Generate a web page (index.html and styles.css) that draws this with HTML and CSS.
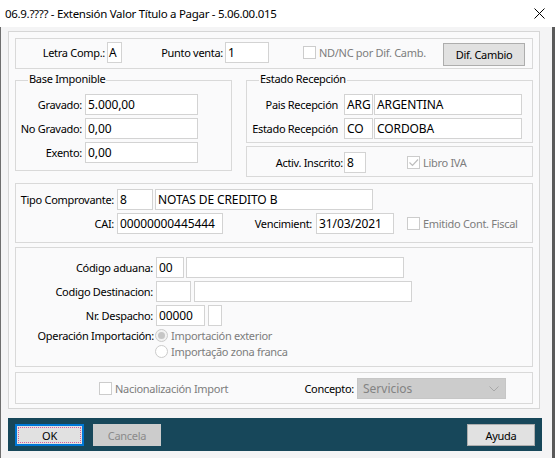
FILE: index.html
```html
<!DOCTYPE html>
<html lang="es">
<head>
<meta charset="utf-8">
<title>Extensión Valor Título a Pagar</title>
<link rel="stylesheet" href="styles.css">
</head>
<body>
<div class="window">
  <div class="titlebar">
    <span class="title">06.9.???? - Extensión Valor Título a Pagar - 5.06.00.015</span>
    <svg class="close" width="11" height="11" viewBox="0 0 11 11"><path d="M0.5 0.5 L10.5 10.5 M10.5 0.5 L0.5 10.5" stroke="#000" stroke-width="1" fill="none"/></svg>
  </div>
  <div class="client">
    <div class="panel">
      <div class="group g-top">
        <span class="lbl w-letra">Letra Comp.:</span>
        <span class="inp w-a">A</span>
        <span class="lbl w-punto">Punto venta:</span>
        <span class="inp w-punto-inp">1</span>
        <span class="chk chk-nd"></span>
        <span class="dis chk-text">ND/NC por Dif. Camb.</span>
        <span class="btn btn-dif">Dif. Cambio</span>
      </div>

      <div class="mid">
        <div class="group titled g-base">
          <span class="legend">Base Imponible</span>
          <div class="row"><span class="lbl w-base">Gravado:</span><span class="inp w-base-inp">5.000,00</span></div>
          <div class="row"><span class="lbl w-base">No Gravado:</span><span class="inp w-base-inp">0,00</span></div>
          <div class="row"><span class="lbl w-base">Exento:</span><span class="inp w-base-inp">0,00</span></div>
        </div>
        <div class="rightcol">
          <div class="group titled g-estado">
            <span class="legend">Estado Recepción</span>
            <div class="row"><span class="lbl w-est">Pais Recepción</span><span class="inp w-code">ARG</span><span class="inp w-name">ARGENTINA</span></div>
            <div class="row"><span class="lbl w-est">Estado Recepción</span><span class="inp w-code">CO</span><span class="inp w-name">CORDOBA</span></div>
          </div>
          <div class="group g-activ">
            <div class="row">
              <span class="lbl w-activ">Activ. Inscrito:</span><span class="inp w-activ-inp">8</span>
              <span class="chk chk-libro"><svg width="11" height="11" viewBox="0 0 11 11"><path d="M1.5 5.5 L4.5 8.5 L10 2.5" stroke="#bdbdbd" stroke-width="1.2" fill="none"/></svg></span>
              <span class="dis chk-text">Libro IVA</span>
            </div>
          </div>
        </div>
      </div>

      <div class="group g-tipo">
        <div class="row"><span class="lbl w-tipo">Tipo Comprovante:</span><span class="inp w-tipo8">8</span><span class="inp w-notas">NOTAS DE CREDITO B</span></div>
        <div class="row">
          <span class="lbl w-tipo">CAI:</span><span class="inp w-cai">00000000445444</span>
          <span class="lbl w-venc">Vencimient:</span><span class="inp w-venc-inp">31/03/2021</span>
          <span class="chk chk-emit"></span><span class="dis chk-text">Emitido Cont. Fiscal</span>
        </div>
      </div>

      <div class="group g-aduana">
        <div class="row"><span class="lbl w-adu">Código aduana:</span><span class="inp w-a1">00</span><span class="inp w-a1w"></span></div>
        <div class="row"><span class="lbl w-adu">Codigo Destinacion:</span><span class="inp w-a2"></span><span class="inp w-a2w"></span></div>
        <div class="row"><span class="lbl w-adu">Nr. Despacho:</span><span class="inp w-a3">00000</span><span class="inp w-a3s"></span></div>
        <div class="oprow">
          <span class="lbl w-op">Operación Importación:</span>
          <div class="radios">
            <div class="ritem"><span class="radio on"></span><span class="dis rtext">Importación exterior</span></div>
            <div class="ritem"><span class="radio"></span><span class="dis rtext">Importação zona franca</span></div>
          </div>
        </div>
      </div>

      <div class="group g-nac">
        <span class="chk chk-nac"></span><span class="dis chk-text">Nacionalización Import</span>
        <span class="lbl concepto">Concepto:</span>
        <span class="combo"><span>Servicios</span><svg width="10" height="6" viewBox="0 0 10 6"><path d="M0.5 0.5 L5 5 L9.5 0.5" stroke="#a8a8a8" stroke-width="1" fill="none"/></svg></span>
      </div>
    </div>

    <div class="bar">
      <span class="btn btn-ok">OK</span>
      <span class="btn btn-dis">Cancela</span>
      <span class="btn btn-ayuda">Ayuda</span>
    </div>
  </div>
</div>
</body>
</html>
```

FILE: styles.css
```css
* { box-sizing: border-box; }
html, body { margin: 0; padding: 0; }
body {
  width: 555px;
  height: 458px;
  overflow: hidden;
  font-family: "Noto Sans", "Liberation Sans", sans-serif;
  font-size: 11px;
  letter-spacing: -0.3px;
  color: #000;
  background: #f4f4f5;
}
.window { width: 555px; height: 458px; display: flex; flex-direction: column; }
.titlebar {
  height: 27px;
  flex: none;
  background: #fff;
  display: flex;
  align-items: center;
  padding-left: 5px;
}
.title { flex: 1; font-size: 11.5px; letter-spacing: -0.3px; white-space: nowrap; }
.close { margin-right: 10px; flex: none; }

.client {
  flex: 1;
  border-left: 1px solid #6e6e6e;
  border-right: 3px solid #5a5a5a;
  padding: 4px 0 0 7px;
  background: #f4f4f5;
}
.panel {
  width: 532px;
  border: 1px solid #d6d6d6;
  background: #fafafb;
  padding: 6px 6px 4px 6px;
}
.group { border: 1px solid #d9d9d9; background: #fafafb; }
.titled { position: relative; }
.legend {
  position: absolute;
  top: -9px;
  left: 12px;
  padding: 0 1px;
  line-height: 14px;
  background: #fafafb;
}
.row { display: flex; align-items: center; height: 21px; }
.row + .row { margin-top: 3px; }
.lbl { flex: none; text-align: right; white-space: nowrap; }
.inp {
  flex: none;
  height: 21px;
  border: 1px solid #d3d3d3;
  background: #fff;
  padding: 0 2px;
  font-size: 12px;
  letter-spacing: -0.1px;
  line-height: 19px;
  white-space: nowrap;
  overflow: hidden;
}
.dis { color: #7d7d7d; white-space: nowrap; }
.chk {
  flex: none;
  width: 13px;
  height: 13px;
  border: 1px solid #cccccc;
  background: #fff;
  display: flex;
  align-items: center;
  justify-content: center;
}
.chk-text { margin-left: 3px; }
.btn {
  flex: none;
  display: flex;
  align-items: center;
  justify-content: center;
  height: 22px;
  width: 68px;
  border: 1px solid #adadad;
  background: #e1e1e1;
  white-space: nowrap;
}

/* top group */
.g-top { height: 31px; display: flex; align-items: flex-start; padding-top: 3px; }
.g-top .lbl, .g-top .dis { line-height: 21px; }
.g-top .inp { height: 21px; }
.w-letra { width: 91px; padding-right: 2px; }
.w-a { width: 15px; padding: 0 1px; }
.w-punto { width: 103px; padding-right: 2px; }
.w-punto-inp { width: 44px; }
.chk-nd { margin-left: 34px; margin-top: 4px; }
.btn-dif { margin-left: auto; margin-right: 7px; margin-top: 1px; width: 82px; height: 23px; }

/* middle */
.mid { display: flex; align-items: flex-start; margin-top: 11px; }
.g-base { width: 217px; height: 91px; padding-top: 13px; }
.w-base { width: 69px; padding-right: 3px; }
.w-base-inp { width: 113px; }
.rightcol { margin-left: 14px; width: 287px; }
.g-estado { height: 63px; padding-top: 13px; }
.w-est { width: 97px; padding-right: 6px; }
.w-code { width: 29px; }
.w-name { width: 148px; margin-left: 1px; }
.g-activ { margin-top: 3px; height: 31px; padding-top: 5px; }
.w-activ { width: 97px; padding-right: 1px; }
.w-activ-inp { width: 22px; }
.chk-libro { margin-left: 41px; }

/* tipo */
.g-tipo { margin-top: 6px; height: 60px; padding-top: 5px; }
.w-tipo { width: 101px; padding-right: 3px; }
.w-tipo8 { width: 36px; }
.w-notas { width: 218px; margin-left: 2px; }
.w-cai { width: 106px; }
.w-venc { width: 93px; padding-right: 4px; }
.w-venc-inp { width: 78px; }
.chk-emit { margin-left: 13px; }

/* aduana */
.g-aduana { margin-top: 4px; height: 120px; padding-top: 9px; }
.w-adu { width: 140px; padding-right: 3px; }
.w-a1 { width: 28px; }
.w-a1w { width: 218px; margin-left: 2px; }
.w-a2 { width: 35px; }
.w-a2w { width: 218px; margin-left: 3px; }
.w-a3 { width: 49px; }
.w-a3s { width: 14px; margin-left: 3px; }
.oprow { display: flex; align-items: flex-start; margin-top: 3px; }
.w-op { width: 139px; padding-right: 1px; line-height: 13px; }
.radios { display: flex; flex-direction: column; gap: 3px; }
.ritem { display: flex; align-items: center; height: 13px; }
.radio {
  flex: none;
  width: 13px;
  height: 13px;
  border-radius: 50%;
  border: 1px solid #cbcbcb;
  background: #fff;
  display: flex;
  align-items: center;
  justify-content: center;
}
.radio.on { background: #f2f2f2; }
.radio.on::after {
  content: "";
  width: 7px;
  height: 7px;
  border-radius: 50%;
  background: #c6c6c6;
}
.rtext { margin-left: 3px; line-height: 13px; }

/* nacionalizacion */
.g-nac { margin-top: 5px; height: 32px; display: flex; align-items: center; }
.chk-nac { margin-left: 83px; }
.concepto { margin-left: auto; padding-right: 3px; }
.combo {
  flex: none;
  width: 149px;
  height: 21px;
  margin-right: 26px;
  margin-top: 1px;
  background: #cccccc;
  border: 1px solid #c6c6c6;
  color: #838383;
  font-size: 12px;
  letter-spacing: 0;
  padding: 0 6px 0 5px;
  display: flex;
  align-items: center;
  justify-content: space-between;
}

/* bottom bar */
.bar {
  margin-top: 9px;
  width: 534px;
  height: 33px;
  background: #17475a;
  display: flex;
  align-items: flex-start;
  padding: 6px 7px 0 7px;
}
.btn-ok {
  width: 69px;
  border: 2px solid #0078d7;
  position: relative;
}
.btn-ok::after {
  content: "";
  position: absolute;
  inset: 1px;
  border: 1px dotted #d2609a;
}
.btn-dis {
  margin-left: 9px;
  background: #cccccc;
  border-color: #cccccc;
  color: #8a8a8a;
}
.btn-ayuda { margin-left: auto; }
```
